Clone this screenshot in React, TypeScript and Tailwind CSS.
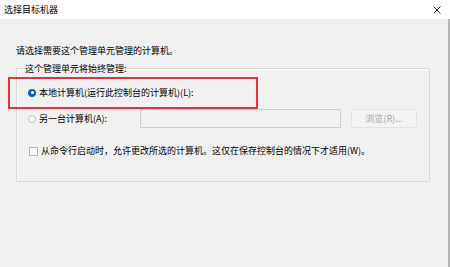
export default function App() {
  return (
    <div
      className="relative flex h-[267px] w-[450px] flex-col overflow-hidden text-[9px] leading-[12px] text-black"
      style={{ fontFamily: '"Noto Sans CJK SC", "Noto Sans", sans-serif' }}
    >
      {/* title bar */}
      <div className="flex h-[19px] items-center justify-between bg-white pl-[4px] pr-[9px]">
        <span>选择目标机器</span>
        <svg width="8" height="8" viewBox="0 0 8 8" className="text-[#333]">
          <path d="M0.5 0.5 L7.5 7.5 M7.5 0.5 L0.5 7.5" stroke="currentColor" strokeWidth="1" />
        </svg>
      </div>

      {/* body */}
      <div className="flex flex-1 flex-col border-r-[2px] border-[#b4b4b4] bg-[#f0f0f0] pl-[16px] pt-[26px]">
        <div className="h-[12px]">请选择需要这个管理单元管理的计算机。</div>

        <div className="mt-[11px] flex h-[114px] w-[414px] flex-col border border-[#dadada] pb-[24px] pl-[11px] shadow-[inset_1px_1px_0_#fafafa]">
          <div className="-mt-[6px] ml-[-4px] h-[12px] self-start bg-[#f0f0f0] px-[1px]">这个管理单元将始终管理:</div>

          <div className="mt-[11px] flex h-[14px] items-center gap-[3px]">
            <span className="flex h-[8px] w-[8px] items-center justify-center rounded-full bg-[#0067c0]">
              <span className="h-[3px] w-[3px] rounded-full bg-white" />
            </span>
            <span>本地计算机(运行此控制台的计算机)(L):</span>
          </div>

          <div className="mt-[10px] flex h-[19px] items-center">
            <span className="h-[8px] w-[8px] rounded-full border border-[#c4c4c4] bg-[#f7f7f7]" />
            <span className="ml-[3px] w-[101px]">另一台计算机(A):</span>
            <div className="h-[19px] w-[201px] border border-[#cfcfcf] bg-[#f0f0f0]" />
            <div className="ml-[10px] flex h-[19px] w-[66px] items-center justify-center rounded-[2px] border border-[#e2e2e2] bg-[#f3f3f3] text-[#a6a6a6]">
              浏览(R)...
            </div>
          </div>

          <div className="mt-[17px] flex h-[12px] items-center gap-[3px] pl-[1px]">
            <span className="h-[9px] w-[9px] border border-[#b9b9b9] bg-[#f7f7f7]" />
            <span>从命令行启动时，允许更改所选的计算机。这仅在保存控制台的情况下才适用(W)。</span>
          </div>
        </div>
      </div>

      {/* red highlight annotation */}
      <div className="absolute left-[8px] top-[77px] h-[32px] w-[250px] border-2 border-[#e5333a]" />
    </div>
  );
}
